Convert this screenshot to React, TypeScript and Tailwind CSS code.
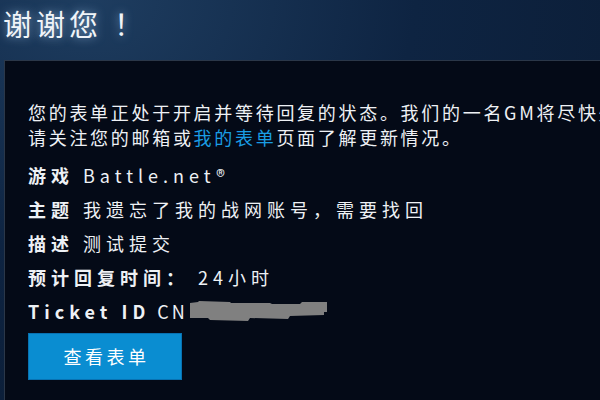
const font = { fontFamily: '"Noto Sans CJK SC", "Noto Sans", sans-serif' };

function Row({ label, value }: { label: string; value: string }) {
  return (
    <div className="leading-[34px] whitespace-nowrap tracking-[5px]">
      <span className="font-bold">{label}</span> <span>{value}</span>
    </div>
  );
}

export default function App() {
  return (
    <div
      className="w-[600px] h-[400px] overflow-hidden bg-[radial-gradient(ellipse_at_15%_0%,#1e3d60_0%,#0e2442_45%,#0a1a31_100%)] text-[#eef1f5]"
      style={font}
    >
      <header className="h-[60px] pl-[3px]">
        <h1 className="text-[29px] leading-[47px] tracking-[4px] text-[#f0f4f8] [text-shadow:0_0_10px_rgba(170,210,245,0.7)]">
          谢谢您<span className="ml-[12px]">！</span>
        </h1>
      </header>

      <section className="ml-[4px] w-[700px] h-[400px] border-l border-t border-[#2b3748] bg-[#040a17] pl-[23px] pt-[39px] text-[18px] tracking-[2.7px]">
        <div className="leading-[25px] whitespace-nowrap">
          <p>您的表单正处于开启并等待回复的状态。我们的一名GM将尽快处理您的表单。</p>
          <p>
            请关注您的邮箱或<span className="text-[#1a9de4]">我的表单</span>页面了解更新情况。
          </p>
        </div>

        <div className="mt-[8px]">
          <Row label="游戏" value="Battle.net®" />
          <Row label="主题" value="我遗忘了我的战网账号，需要找回" />
          <Row label="描述" value="测试提交" />
          <Row label="预计回复时间：" value="24小时" />
          <div className="leading-[34px] whitespace-nowrap flex items-center tracking-[5px]">
            <span className="font-bold">Ticket ID</span>
            <span className="ml-[7px] tracking-[3px]">CN</span>
            <svg width="138" height="20" viewBox="0 0 138 20" className="ml-[2px]">
              <polygon
                points="0,2 8,1 9,0 40,1 41,2 80,2 82,3 110,3 112,1 137,1 137,11 134,11 134,14 100,15 98,18 60,17 58,20 20,19 18,17 0,17"
                fill="#808080"
              />
            </svg>
          </div>
        </div>

        <button className="mt-[5px] w-[154px] h-[47px] bg-[#0a8dd1] border border-[#0872b2] text-white text-[18px] tracking-[3.5px] pl-[3px] flex items-center justify-center">
          查看表单
        </button>
      </section>
    </div>
  );
}
